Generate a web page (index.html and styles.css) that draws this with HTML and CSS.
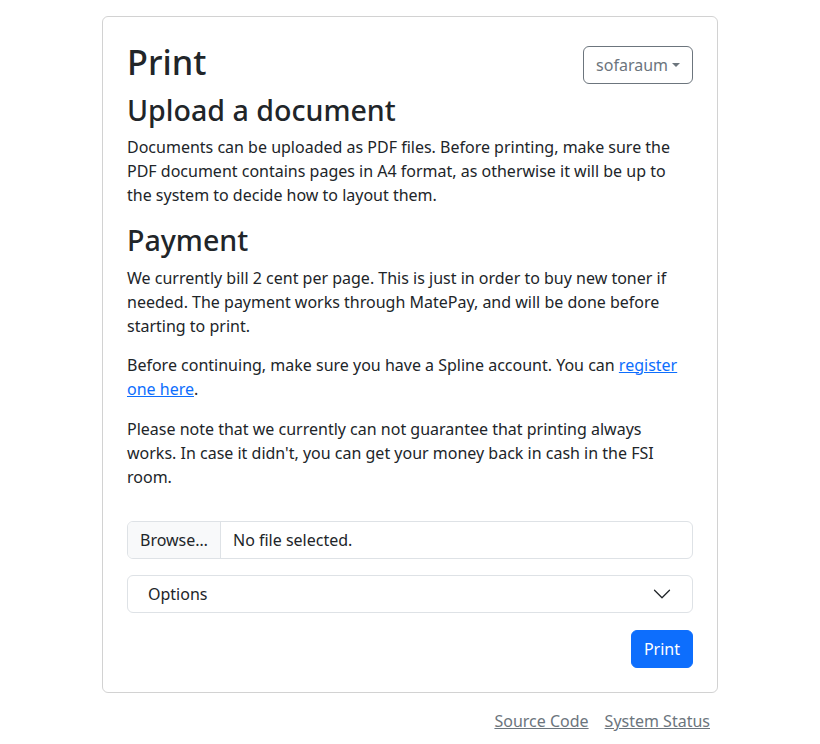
FILE: index.html
```html
<!DOCTYPE html>
<html lang="en">
<head>
<meta charset="utf-8">
<title>Print</title>
<link rel="stylesheet" href="styles.css">
</head>
<body>
<main class="container">
  <div class="card">
    <div class="card-header">
      <h1>Print</h1>
      <button class="btn btn-outline" type="button">sofaraum<span class="caret"></span></button>
    </div>
    <h2>Upload a document</h2>
    <p>Documents can be uploaded as PDF files. Before printing, make sure the PDF document contains pages in A4 format, as otherwise it will be up to the system to decide how to layout them.</p>
    <h2>Payment</h2>
    <p class="tight">We currently bill 2 cent per page. This is just in order to buy new toner if needed. The payment works through MatePay, and will be done before starting to print.</p>
    <p>Before continuing, make sure you have a Spline account. You can <a href="#">register one here</a>.</p>
    <p>Please note that we currently can not guarantee that printing always works. In case it didn't, you can get your money back in cash in the FSI room.</p>
    <form class="print-form">
      <div class="file-input">
        <span class="file-btn">Browse…</span>
        <span class="file-name">No file selected.</span>
      </div>
      <div class="accordion">
        <span>Options</span>
        <svg class="chevron" viewBox="0 0 16 16" width="20" height="20"><path fill="none" stroke="#212529" stroke-linecap="round" stroke-linejoin="round" d="M2 5L8 11L14 5"/></svg>
      </div>
      <div class="actions">
        <button class="btn btn-primary" type="button">Print</button>
      </div>
    </form>
  </div>
  <footer class="footer">
    <a href="#">Source Code</a>
    <a href="#">System Status</a>
  </footer>
</main>
</body>
</html>
```
FILE: styles.css
```css
* { box-sizing: border-box; }
html, body { margin: 0; }
body {
  font-family: "Noto Sans", "Liberation Sans", sans-serif;
  font-size: 16px;
  line-height: 1.5;
  color: #212529;
  background: #fff;
}
.container {
  width: 616px;
  margin: 16px auto 0;
}
.card {
  border: 1px solid rgba(0,0,0,.175);
  border-radius: 6px;
  padding: 24px;
}
.card-header {
  display: flex;
  justify-content: space-between;
  align-items: flex-start;
}
.card-header .btn { margin-top: 5px; }
h1, h2 {
  margin: 0 0 8px;
  font-weight: 500;
  line-height: 1.2;
}
h1 { font-size: 34.3px; margin-bottom: 11px; }
h2 { font-size: 28.58px; }
p { margin: 0 0 16px; }
p.tight { margin-bottom: 15px; }
a { color: #0d6efd; }
.btn {
  font-family: inherit;
  font-size: 16px;
  line-height: 1.5;
  padding: 6px 12px;
  border-radius: 6px;
  border: 1px solid transparent;
  cursor: pointer;
}
.btn-outline {
  background: #fff;
  color: #6c757d;
  border-color: #6c757d;
  display: flex;
  align-items: center;
}
.caret {
  display: inline-block;
  margin-left: 4px;
  border-top: 4px solid #6c757d;
  border-left: 4px solid transparent;
  border-right: 4px solid transparent;
}
.btn-primary {
  background: #0d6efd;
  color: #fff;
  border-color: #0d6efd;
}
.print-form {
  margin-top: 32px;
  display: flex;
  flex-direction: column;
  gap: 16px;
}
.file-input {
  display: flex;
  border: 1px solid #dee2e6;
  border-radius: 6px;
  overflow: hidden;
  height: 38px;
}
.file-btn {
  background: #f8f9fa;
  border-right: 1px solid #dee2e6;
  padding: 6px 12px;
}
.file-name {
  padding: 6px 12px;
}
.accordion {
  display: flex;
  justify-content: space-between;
  align-items: center;
  border: 1px solid #dee2e6;
  border-radius: 6px;
  height: 38px;
  padding: 0 20px;
}
.chevron { display: block; }
.actions {
  display: flex;
  justify-content: flex-end;
  margin-top: 1px;
}
.footer {
  display: flex;
  justify-content: flex-end;
  gap: 16px;
  padding: 16px 8px 0 0;
}
.footer a { color: #6c757d; }
```
